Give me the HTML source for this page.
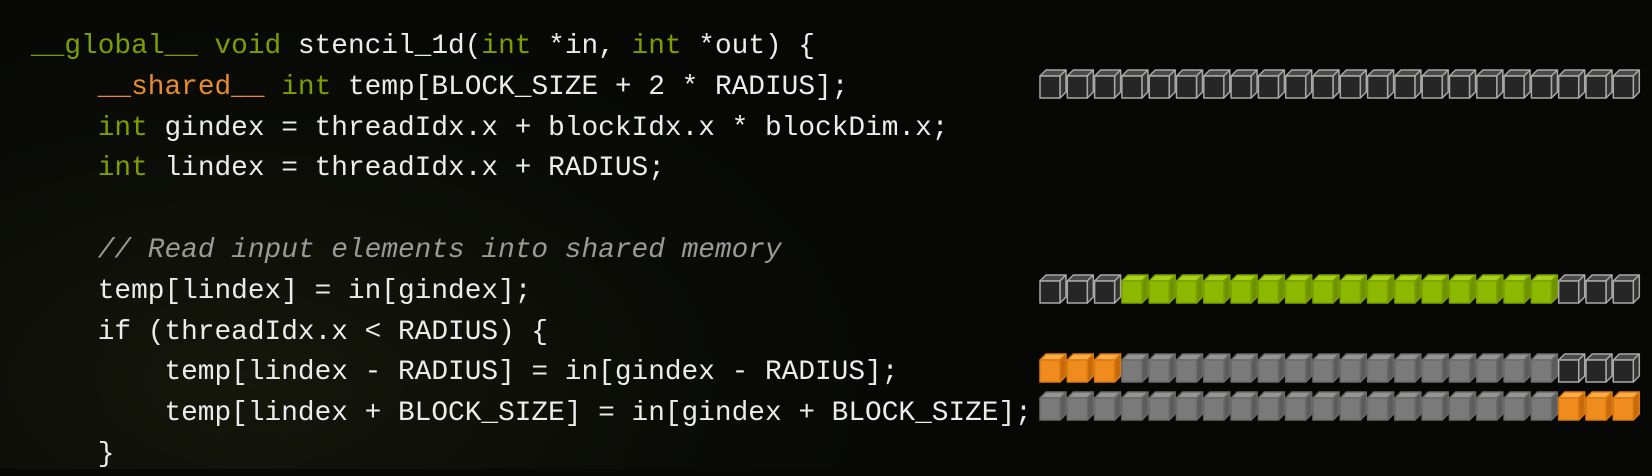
<!DOCTYPE html>
<html><head><meta charset="utf-8"><style>
html,body{margin:0;padding:0;background:#080906;}
body{width:1652px;height:469px;overflow:hidden;position:relative;
background:radial-gradient(ellipse 700px 400px at 250px 380px,#15170c 0%,#0b0c07 60%,#070805 100%);}
pre{position:absolute;left:31px;top:27px;margin:0;font-family:"Liberation Mono",monospace;font-size:27.8px;line-height:40.8px;color:#ececec;}
.g{color:#7d9e00}.o{color:#e98b2b}.c{color:#9a9a9a;font-style:italic}
svg{position:absolute;left:0;top:0}
</style></head><body>
<pre><span class="g">__global__</span> <span class="g">void</span> stencil_1d(<span class="g">int</span> *in, <span class="g">int</span> *out) {
    <span class="o">__shared__</span> <span class="g">int</span> temp[BLOCK_SIZE + 2 * RADIUS];
    <span class="g">int</span> gindex = threadIdx.x + blockIdx.x * blockDim.x;
    <span class="g">int</span> lindex = threadIdx.x + RADIUS;

    <span class="c">// Read input elements into shared memory</span>
    temp[lindex] = in[gindex];
    if (threadIdx.x &lt; RADIUS) {
        temp[lindex - RADIUS] = in[gindex - RADIUS];
        temp[lindex + BLOCK_SIZE] = in[gindex + BLOCK_SIZE];
    }</pre>
<svg width="1652" height="469" id="s"></svg>
<script>
var rows=[[69,"k".repeat(22)],[274,"kkk"+"g".repeat(16)+"kkk"],[353,"ooo"+"s".repeat(16)+"kkk"],[391,"s".repeat(19)+"ooo"]];
var C={k:["#262626","#4a4a4a","#333","#a8a8a8"],g:["#8cb800","#a6d21a","#6f9300","#7aa000"],o:["#f08c1e","#ffab4a","#c86a0c","#d87a10"],s:["#7a7a7a","#959595","#5c5c5c","#6a6a6a"]};
var h="";
rows.forEach(function(r){var y=r[0];for(var i=0;i<22;i++){var x=1040+i*27.3;var c=C[r[1][i]];
h+='<g stroke="'+c[3]+'" stroke-width="1.5" stroke-linejoin="round">'+
'<polygon points="'+x+','+(y+7)+' '+(x+6)+','+(y+1)+' '+(x+26)+','+(y+1)+' '+(x+20)+','+(y+7)+'" fill="'+c[1]+'"/>'+
'<polygon points="'+(x+20)+','+(y+7)+' '+(x+26)+','+(y+1)+' '+(x+26)+','+(y+23)+' '+(x+20)+','+(y+29)+'" fill="'+c[2]+'"/>'+
'<rect x="'+x+'" y="'+(y+7)+'" width="20" height="22" fill="'+c[0]+'"/></g>';}});
document.getElementById("s").innerHTML=h;
</script>
</body></html>
